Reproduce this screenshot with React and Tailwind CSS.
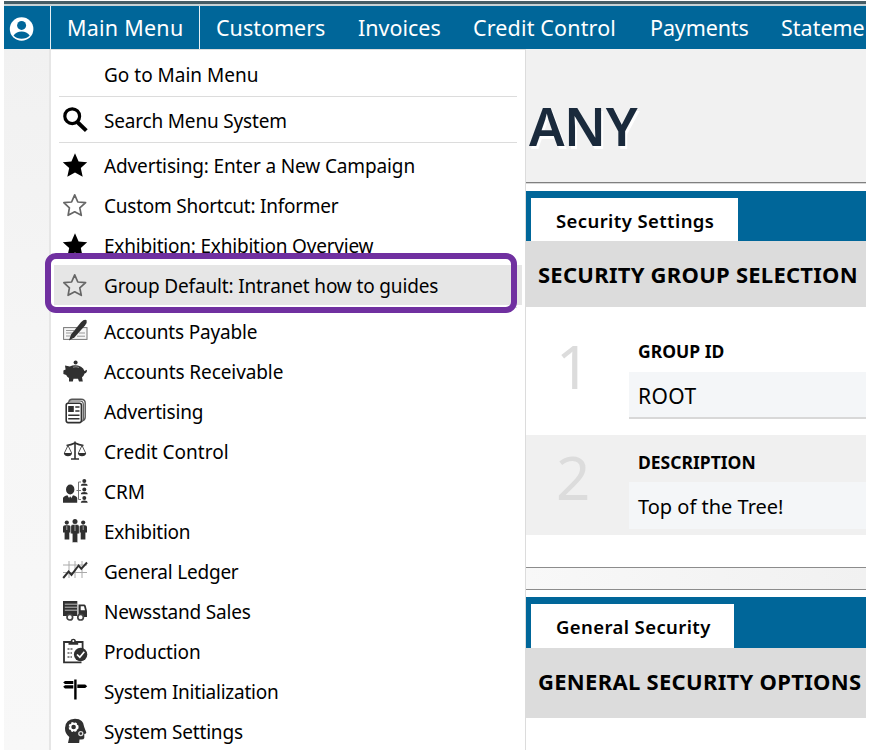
import React from "react";

function Icon({ children }) {
  return (
    <svg viewBox="0 0 26 26" className="h-[26px] w-[26px] shrink-0" fill="#303030">
      {children}
    </svg>
  );
}

const starPath = "M13 1.2 L16.6 9.4 L25.2 10.2 L18.8 16 L20.7 24.8 L13 20.6 L5.3 24.8 L7.2 16 L0.8 10.2 L9.4 9.4 Z";

const icons = {
  search: (
    <Icon>
      <circle cx="10.2" cy="9.2" r="7.4" fill="none" stroke="#000" strokeWidth="3.2" />
      <path d="M15.3 15 L24.3 23.6" stroke="#000" strokeWidth="4" />
    </Icon>
  ),
  star: (
    <Icon>
      <path d={starPath} fill="#000" />
    </Icon>
  ),
  starOutline: (
    <Icon>
      <path
        d="M12.7 2.8 L15.8 10 L23.6 10.7 L17.8 15.8 L19.3 23.3 L12.7 19.8 L6.1 23.3 L7.4 15.8 L1.8 10.7 L9.6 10 Z"
        fill="none"
        stroke="#666"
        strokeWidth="1.7"
        strokeLinejoin="round"
      />
    </Icon>
  ),
  cheque: (
    <Icon>
      <rect x="1.6" y="9.6" width="23.4" height="11.8" fill="#f6f6f6" stroke="#777" />
      <path d="M4 12.5h8M4 15h7M4 18h4M17 15h6M15 18.2h8" stroke="#999" strokeWidth="1" />
      <path d="M7 22.5 L8.8 16.8 L19 4.2 Q22.5 0.8 24.6 2.2 Q25.4 4.4 23 7.4 L12.6 19.2 Z" />
    </Icon>
  ),
  pig: (
    <Icon>
      <circle cx="13.6" cy="4.5" r="2" />
      <path d="M3 7.6 L7.8 8.6 Q13 6 19 8.8 Q21.6 10.2 22.4 13 L24.8 11.8 Q25.6 14.5 22.6 15.6 Q21.8 18 20 19.3 L20.8 23.6 H17 L16 20.8 H11.5 L10.8 23.6 H7 L7 20 Q5 18.8 4.2 17 L1.4 16 V12.4 L3.6 11.6 Z" />
      <path d="M11 9.2 Q14 8.2 17 9.4" fill="none" stroke="#aaa" strokeWidth="0.8" />
    </Icon>
  ),
  news: (
    <Icon>
      <path d="M7 3.4 Q7.5 1.2 10 1.2 H19 Q23.2 1.2 23.2 5 V19 Q23.2 22 20.8 22.5" fill="none" stroke="#555" strokeWidth="1.4" />
      <path d="M6 4.8 Q6.5 3 9 3 H18 Q21.3 3 21.3 6.4 V21 Q21.2 23.5 19.5 24" fill="none" stroke="#555" strokeWidth="1.2" />
      <rect x="4.2" y="5.2" width="15.2" height="19.4" rx="2" fill="#fff" stroke="#303030" strokeWidth="1.6" />
      <rect x="6.2" y="8" width="5.6" height="6" />
      <path d="M13.3 9h4.2M13.3 13h4.2M6.2 17.3h11.3M6.2 20.8h11.3" stroke="#333" strokeWidth="1.4" />
    </Icon>
  ),
  scales: (
    <Icon>
      <path d="M13 3.5V20.5M4.5 7.5Q9 7 13 5Q17 7 21.5 7.5M9 21h8" fill="none" stroke="#303030" strokeWidth="1.6" />
      <path d="M6 7.5L2.4 15M6 7.5L9.6 15M20 7.5L16.4 15M20 7.5L23.6 15" fill="none" stroke="#555" strokeWidth="1" />
      <path d="M1.8 15H10Q9.6 18.3 6 18.3T1.8 15ZM15.8 15H24.2Q23.6 18.3 20 18.3T15.8 15Z" />
    </Icon>
  ),
  crm: (
    <Icon>
      <ellipse cx="8.2" cy="11.5" rx="4.2" ry="5" />
      <path d="M1 24.8V20Q1.4 18.4 5.4 17.2L8.2 22L11 17.2Q15 18.4 15.2 20V24.8Z" />
      <path d="M8.2 18.2L9.4 20L8.7 24H7.7L7 20Z" />
      <path d="M19 4H16.5V21.5H19M14.5 12.5H19" fill="none" stroke="#777" strokeWidth="1" />
      <circle cx="22.3" cy="3" r="2" />
      <path d="M18.8 7.8Q19 5.5 22.3 5.5T25.7 7.8Z" />
      <circle cx="22.3" cy="11.5" r="2" />
      <path d="M18.8 16.3Q19 14 22.3 14T25.7 16.3Z" />
      <circle cx="22.3" cy="20" r="2" />
      <path d="M18.8 24.8Q19 22.5 22.3 22.5T25.7 24.8Z" />
    </Icon>
  ),
  people: (
    <Icon>
      <circle cx="4.8" cy="4.6" r="2.1" />
      <path d="M1 9Q1 7.3 3 7.3H6.8Q8.6 7.3 8.6 9V14.5H7.3V21.5H2.6V14.5H1Z" />
      <circle cx="21.2" cy="4.6" r="2.1" />
      <path d="M17.4 9Q17.4 7.3 19.2 7.3H23Q25 7.3 25 9V14.5H23.4V21.5H18.7V14.5H17.4Z" />
      <circle cx="13" cy="3.4" r="2.5" />
      <path d="M8.7 8.8Q8.7 6.5 11 6.5H15Q17.3 6.5 17.3 8.8V15.8H15.7V24.5H10.3V15.8H8.7Z" stroke="#fff" strokeWidth="0.5" />
      <path d="M13 7V13M4.8 8V12M21.2 8V12" stroke="#bbb" strokeWidth="0.8" />
    </Icon>
  ),
  chart: (
    <Icon>
      <path d="M7 3V20M13 3V20M20 3V20M1 7H25M1 14.5H25" stroke="#aaa" strokeWidth="1" />
      <path d="M1.2 20L6.6 13.5L9.5 16.8L16.6 7.5L19.3 10.8L25 4.5" fill="none" stroke="#303030" strokeWidth="2" />
    </Icon>
  ),
  truck: (
    <Icon>
      <path d="M1 3H15.3V18H1Z" />
      <path d="M2.8 6.2H15M2.8 9.2H15M2.8 12.2H15" stroke="#ccc" strokeWidth="0.9" />
      <path d="M16.5 6.5H22.3Q23.5 6.5 23.8 8L25 13V19H16.5Z" />
      <path d="M18.7 8.3H22L23 12.2H18.7Z" fill="#fff" />
      <circle cx="7.8" cy="19.2" r="2.8" fill="#fff" stroke="#444" strokeWidth="1.7" />
      <circle cx="18.6" cy="19.2" r="2.8" fill="#fff" stroke="#444" strokeWidth="1.7" />
    </Icon>
  ),
  clipboard: (
    <Icon>
      <path d="M19.5 24.4H2V4H20.6V12" fill="none" stroke="#303030" strokeWidth="1.8" />
      <path d="M6.5 3H8.6Q9 0.7 11.3 0.7T14 3H16.2V6.8H6.5Z" />
      <circle cx="11.3" cy="3" r="1" fill="#fff" />
      <path d="M5.5 11H11M5.5 15H10M5.5 19H10" stroke="#888" strokeWidth="1.8" strokeDasharray="2 1" />
      <circle cx="18.6" cy="16.5" r="6.7" />
      <path d="M15 16.5L17.8 19.2L22.3 13.8" fill="none" stroke="#fff" strokeWidth="1.7" />
    </Icon>
  ),
  signpost: (
    <Icon>
      <path d="M12.2 1.5H14.6V21.5H12.2Z" fill="#000" />
      <path d="M3 3H11.3V6H3L1.2 4.5ZM3 7.2H11.3V10.4H3L1.2 8.8ZM15.3 6.5H23.2L25.2 8.2L23.2 10H15.3Z" fill="#000" />
    </Icon>
  ),
  head: (
    <Icon>
      <path d="M6 25L7.3 19Q2.8 15.5 3 10Q3.5 1 13 0.8Q21.7 1 22.2 9L24.3 14.5Q24.5 15.5 22.3 16V20Q22 22 17.5 21.5L17.2 25Z" />
      <circle cx="11.6" cy="9" r="4.1" fill="none" stroke="#fff" strokeWidth="1.8" strokeDasharray="2.2 1.1" />
      <circle cx="11.6" cy="9" r="3.2" fill="none" stroke="#fff" strokeWidth="1.8" />
      <circle cx="18.8" cy="15.6" r="2" fill="none" stroke="#ddd" strokeWidth="1.3" />
    </Icon>
  ),
};

const shortcuts = [
  { icon: "star", label: "Advertising: Enter a New Campaign", track: "tracking-[-0.13px]" },
  { icon: "starOutline", label: "Custom Shortcut: Informer", track: "tracking-[-0.24px]" },
  { icon: "star", label: "Exhibition: Exhibition Overview", track: "tracking-[-0.2px]" },
  { icon: "starOutline", label: "Group Default: Intranet how to guides", track: "tracking-[-0.15px]", active: true },
];

const modules = [
  { icon: "cheque", label: "Accounts Payable", track: "tracking-[-0.17px]" },
  { icon: "pig", label: "Accounts Receivable", track: "tracking-[-0.1px]" },
  { icon: "news", label: "Advertising", track: "tracking-[-0.18px]" },
  { icon: "scales", label: "Credit Control", track: "tracking-normal" },
  { icon: "crm", label: "CRM", track: "tracking-normal" },
  { icon: "people", label: "Exhibition", track: "tracking-[-0.25px]" },
  { icon: "chart", label: "General Ledger", track: "tracking-[-0.22px]" },
  { icon: "truck", label: "Newsstand Sales", track: "tracking-[-0.2px]" },
  { icon: "clipboard", label: "Production", track: "tracking-[-0.15px]" },
  { icon: "signpost", label: "System Initialization", track: "tracking-[-0.23px]" },
  { icon: "head", label: "System Settings", track: "tracking-[-0.2px]" },
];

function MenuRow({ icon, label, track, active }) {
  return (
    <div className={`mr-[3px] ml-[3px] flex h-10 shrink-0 items-center pl-2 ${active ? "bg-[#e6e6e6]" : ""}`}>
      <span className="flex h-[26px] w-[26px] shrink-0">{icon && icons[icon]}</span>
      <span className={`ml-4 pt-0.5 text-[19px] leading-6 whitespace-nowrap ${track}`}>{label}</span>
    </div>
  );
}

function Divider() {
  return (
    <div className="h-1.5 shrink-0 pt-0.5">
      <div className="mr-2 ml-2 h-px bg-[#dcdcdc]" />
    </div>
  );
}

function TabBar({ label, className }) {
  return (
    <div className="shrink-0 bg-[#006699] pt-[7px] pl-[5px]">
      <div className={`flex items-center bg-white pt-0.5 pl-[25px] ${className}`}>
        <span className="text-[18.5px] leading-6 font-semibold tracking-[0.4px] whitespace-nowrap">{label}</span>
      </div>
    </div>
  );
}

function Field({ number, label, value, className, boxClass, valueClass }) {
  return (
    <div className={`flex shrink-0 ${className}`}>
      <div className="-mt-[3px] w-[103px] shrink-0 pl-[30px] text-[60px] leading-[60px] text-[#dcdcdc]">{number}</div>
      <div className="flex flex-1 flex-col">
        <div className="pl-[9px] text-[17.5px] leading-6 font-bold whitespace-nowrap">{label}</div>
        <div className={`flex items-center bg-[#f4f6f8] pl-[9px] leading-7 ${boxClass}`}>
          <span className={`whitespace-nowrap ${valueClass}`}>{value}</span>
        </div>
      </div>
    </div>
  );
}

export default function App() {
  return (
    <div className="h-[752px] w-[870px] overflow-hidden bg-white px-1 pt-px font-['Noto_Sans',sans-serif] text-black">
      <div className="relative flex h-[749px] flex-col overflow-hidden">
        <div className="h-[3px] shrink-0 bg-[#465d66]" />
        <div className="h-0.5 shrink-0 bg-[#c9d3d6]" />
        <nav className="flex h-[43px] shrink-0 items-center bg-[#006699] text-[21.5px] leading-7 whitespace-nowrap text-white">
          <div className="flex h-full w-[46px] shrink-0 items-center pl-[5px]">
            <svg viewBox="0 0 26 26" className="mt-0.5 h-[26px] w-[26px]">
              <circle cx="12.6" cy="13" r="11.8" fill="#fff" />
              <circle cx="12.6" cy="9.4" r="4.5" fill="#006699" />
              <path d="M4.5 19.6Q7.5 15.5 12.6 15.5T20.7 19.6Q17.5 22.8 12.6 22.8T4.5 19.6Z" fill="#006699" />
            </svg>
          </div>
          <div className="flex h-full w-[150px] shrink-0 items-center border-x border-white/90 pl-4 tracking-[0.25px]">
            Main Menu
          </div>
          <div className="w-[142px] shrink-0 pl-4">Customers</div>
          <div className="w-[115px] shrink-0 pl-4">Invoices</div>
          <div className="w-[177px] shrink-0 pl-4 tracking-[0.15px]">Credit Control</div>
          <div className="w-[131px] shrink-0 pl-4 tracking-[-0.12px]">Payments</div>
          <div className="shrink-0 pl-4">Statements</div>
        </nav>

        <div className="flex min-h-0 flex-1">
          <div className="w-[45px] shrink-0 bg-linear-to-b from-[#f1f1f1] via-[#f6f6f6] to-[#f8f8f8]" />
          <aside className="flex w-[477px] shrink-0 flex-col border-t border-r border-l-2 border-t-[#dedede] border-r-[#dcdcdc] border-l-[#e6e6e6] bg-white pt-1">
            <MenuRow label="Go to Main Menu" track="tracking-normal" />
            <Divider />
            <MenuRow icon="search" label="Search Menu System" track="tracking-[-0.18px]" />
            <div className="-mb-px">
              <Divider />
            </div>
            {shortcuts.map((row) => (
              <MenuRow key={row.label} {...row} />
            ))}
            <Divider />
            {modules.map((row) => (
              <MenuRow key={row.label} {...row} />
            ))}
          </aside>

          <main className="flex flex-1 flex-col overflow-hidden bg-white">
            <header className="h-[133px] shrink-0 bg-[#f1f1f1] pt-[41px] pl-[3px]">
              <h1 className="text-[53px] leading-[72px] font-semibold tracking-[-0.5px] text-[#1a2a3c] [text-shadow:2px_3px_0_#fff]">
                ANY
              </h1>
            </header>
            <div className="h-px shrink-0 bg-[#808080]" />
            <div className="h-px shrink-0 bg-[#d8d8d8]" />
            <div className="h-[7px] shrink-0" />
            <TabBar label="Security Settings" className="h-[43px] w-[207px]" />
            <h2 className="h-[66px] shrink-0 bg-[#dcdcdc] pl-3 text-[22px] leading-[66px] font-bold tracking-[0.25px] whitespace-nowrap">
              SECURITY GROUP SELECTION
            </h2>
            <Field
              number="1"
              label="GROUP ID"
              value="ROOT"
              className="h-32 pt-8"
              boxClass="mt-[9px] h-[47px] border-b-2 border-[#d8d8d8]"
              valueClass="pt-0.5 text-[21px] tracking-[0.4px]"
            />
            <Field
              number="2"
              label="DESCRIPTION"
              value="Top of the Tree!"
              className="h-[100px] bg-[#f0f0f0] pt-[15px]"
              boxClass="mt-2 h-[47px]"
              valueClass="pt-0.5 text-[20px] tracking-normal"
            />
            <div className="h-8 shrink-0" />
            <div className="h-[23px] shrink-0 border-y border-[#8c8c8c] bg-linear-to-r from-[#f8f8f8] to-[#f1f1f1]" />
            <div className="h-[7px] shrink-0" />
            <TabBar label="General Security" className="h-11 w-[203px]" />
            <h2 className="h-[70px] shrink-0 bg-[#dcdcdc] pl-3 text-[22px] leading-[66px] font-bold tracking-[0.3px] whitespace-nowrap">
              GENERAL SECURITY OPTIONS
            </h2>
          </main>
        </div>

        <div className="absolute top-[252px] left-[41px] h-[60px] w-[472px] rounded-[11px] border-6 border-[#7030a0]" />
      </div>
    </div>
  );
}
